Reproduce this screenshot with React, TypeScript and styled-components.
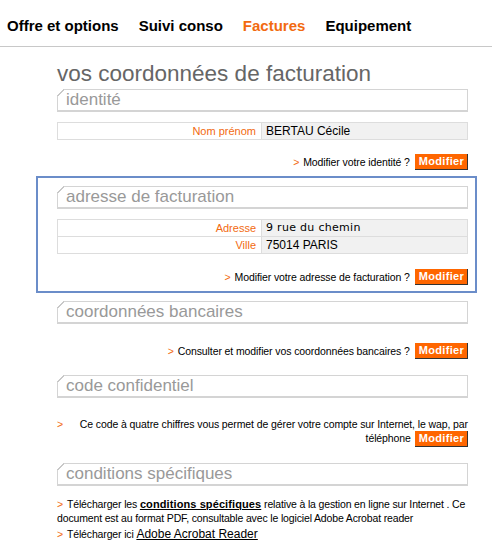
import { FC, ReactNode } from 'react'
import styled, { createGlobalStyle } from 'styled-components'


const GlobalStyle = createGlobalStyle`
  body {
    margin: 0;
    background: #fff;
    font-family: "Liberation Sans", Arial, sans-serif;
    color: #000;
  }
`

const Nav = styled.nav`
  box-sizing: border-box;
  display: flex;
  align-items: center;
  gap: 20px;
  height: 47px;
  padding: 4px 0 0 7px;
  border-bottom: 1px solid #c8c8c8;
`

const NavItem = styled.a<{ $active?: boolean }>`
  font-size: 15px;
  font-weight: bold;
  color: ${p => (p.$active ? '#f26a10' : '#000')};
  text-decoration: none;
`

const Content = styled.main`
  width: 411px;
  margin-left: 57px;
  display: flex;
  flex-direction: column;
`

const Title = styled.h1`
  margin: 15px 0 3px;
  font-size: 22.5px;
  line-height: 24px;
  font-weight: normal;
  color: #666;
`

const SectionHeader = styled.h2<{ $top?: number }>`
  position: relative;
  margin: ${p => p.$top ?? 0}px 0 0;
  height: 20px;
  padding-left: 8px;
  border: 1px solid #d4d4d4;
  border-bottom: 2px solid #d4d4d4;
  font-size: 17px;
  line-height: 20px;
  font-weight: normal;
  color: #999;

  &::before {
    content: '';
    position: absolute;
    top: -1px;
    left: -1px;
    width: 7px;
    height: 7px;
    background: linear-gradient(135deg, #fff 0 44%, #c8c8c8 44% 60%, transparent 60%);
  }
`

const InfoTable = styled.div`
  margin-top: 10px;
  border: 1px solid #ddd;
  display: grid;
  grid-template-columns: 204px 1fr;
`

const Label = styled.div`
  padding-right: 5px;
  height: 16px;
  line-height: 16px;
  text-align: right;
  font-size: 11px;
  color: #f26a10;
  border-right: 1px solid #ddd;
  border-bottom: 1px solid #ddd;

  &:nth-last-child(2) {
    border-bottom: none;
  }
`

const Value = styled.div<{ $wide?: boolean }>`
  padding-left: 4px;
  height: 16px;
  line-height: 16px;
  background: #f1f1f1;
  font-size: ${p => (p.$wide ? '11px' : '12px')};
  font-family: ${p => (p.$wide ? '"DejaVu Sans", Verdana, sans-serif' : 'inherit')};
  letter-spacing: ${p => (p.$wide ? '0.3px' : '0')};
  border-bottom: 1px solid #ddd;

  &:last-child {
    border-bottom: none;
  }
`

const ActionRow = styled.div<{ $top: number }>`
  margin-top: ${p => p.$top}px;
  height: 16px;
  display: flex;
  justify-content: flex-end;
  align-items: center;
  gap: 5px;
  font-size: 10.5px;
  letter-spacing: -0.1px;
`

const Arrow = styled.span`
  color: #f26a10;
  font-size: 10.5px;
  margin-right: 4px;
`

const ModifyButton = styled.button`
  height: 16px;
  padding: 0 3px 0 4px;
  margin: 0;
  border: none;
  border-right: 1px solid #333;
  border-bottom: 1px solid #333;
  background: #ff6600;
  color: #fff;
  font-family: inherit;
  font-size: 11px;
  font-weight: bold;
  line-height: 15px;
  letter-spacing: 0.3px;
`

const Highlight = styled.section`
  margin: 6px -9px 0 -21px;
  padding: 8px 7px 6px 19px;
  border: 2px solid #6b8dc9;
  display: flex;
  flex-direction: column;
`

const CodeRow = styled.div`
  margin-top: 19px;
  display: flex;
  font-size: 10.5px;
  line-height: 14px;
  letter-spacing: -0.1px;
`

const CodeArrow = styled(Arrow)`
  width: 19px;
  flex-shrink: 0;
  margin-right: 3px;
`

const CodeText = styled.div`
  flex: 1;
  text-align: right;

  & > button {
    margin-left: 4px;
    vertical-align: middle;
  }
`

const Conditions = styled.div`
  margin-top: 11px;
  font-size: 10.5px;
  line-height: 14px;
  letter-spacing: -0.15px;

  p {
    margin: 0 0 2px;
  }

  a {
    color: #000;
    text-decoration: underline;
  }
`

const BoldLink = styled.a`
  font-weight: bold;
  font-size: 11px;
  letter-spacing: 0.1px;
`

const BigLink = styled.a`
  font-size: 12px;
  letter-spacing: 0;
`


interface IActionProps {
  top: number
  children: ReactNode
}

const Action: FC<IActionProps> = ({ top, children }) => (
  <ActionRow $top={top}>
    <span><Arrow>&gt;</Arrow>{children}</span>
    <ModifyButton>Modifier</ModifyButton>
  </ActionRow>
)


const App: FC = () => {
  return (
    <>
      <GlobalStyle />
      <Nav>
        <NavItem>Offre et options</NavItem>
        <NavItem>Suivi conso</NavItem>
        <NavItem $active>Factures</NavItem>
        <NavItem>Equipement</NavItem>
      </Nav>

      <Content>
        <Title>vos coordonnées de facturation</Title>

        <SectionHeader>identité</SectionHeader>
        <InfoTable>
          <Label>Nom prénom</Label>
          <Value>BERTAU Cécile</Value>
        </InfoTable>
        <Action top={14}>Modifier votre identité ?</Action>

        <Highlight>
          <SectionHeader>adresse de facturation</SectionHeader>
          <InfoTable>
            <Label>Adresse</Label>
            <Value $wide>9 rue du chemin</Value>
            <Label>Ville</Label>
            <Value>75014 PARIS</Value>
          </InfoTable>
          <Action top={15}>Modifier votre adresse de facturation ?</Action>
        </Highlight>

        <SectionHeader $top={8}>coordonnées bancaires</SectionHeader>
        <Action top={19}>Consulter et modifier vos coordonnées bancaires ?</Action>

        <SectionHeader $top={16}>code confidentiel</SectionHeader>
        <CodeRow>
          <CodeArrow>&gt;</CodeArrow>
          <CodeText>
            Ce code à quatre chiffres vous permet de gérer votre compte sur Internet, le wap, par<br />
            téléphone
            <ModifyButton>Modifier</ModifyButton>
          </CodeText>
        </CodeRow>

        <SectionHeader $top={16}>conditions spécifiques</SectionHeader>
        <Conditions>
          <p>
            <Arrow>&gt;</Arrow>Télécharger les <BoldLink href="#">conditions spécifiques</BoldLink> relative à la gestion en ligne sur Internet . Ce<br />
            document est au format PDF, consultable avec le logiciel Adobe Acrobat reader
          </p>
          <p>
            <Arrow>&gt;</Arrow>Télécharger ici <BigLink href="#">Adobe Acrobat Reader</BigLink>
          </p>
        </Conditions>
      </Content>
    </>
  )
}


export default App
